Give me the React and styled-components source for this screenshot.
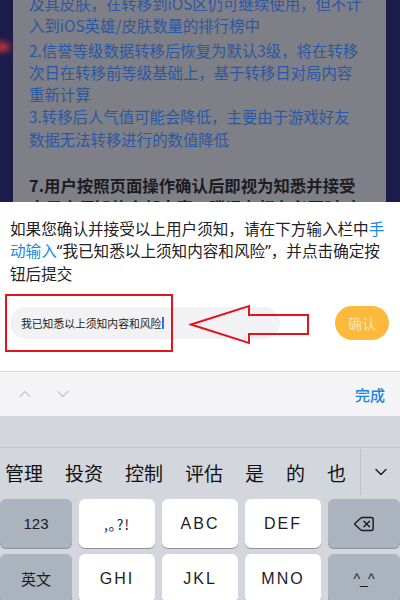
import React from "react";
import styled, { createGlobalStyle } from "styled-components";
import { ChevronUp, ChevronDown, Delete } from "lucide-react";

const Global = createGlobalStyle`
  html, body { margin: 0; padding: 0; }
  body { width: 400px; height: 600px; overflow: hidden; background: #d3d6dc;
    font-family: "Noto Sans CJK SC", "Noto Sans", sans-serif; }
`;

const Screen = styled.div`
  width: 400px;
  height: 600px;
  display: flex;
  flex-direction: column;
  overflow: hidden;
`;

const Backdrop = styled.div`
  position: relative;
  height: 202px;
  flex: none;
  background: #1b1c4a;
  overflow: hidden;
  padding: 0 14px 0 13px;
`;

const Glow = styled.div`
  position: absolute;
  left: -6px;
  top: 42px;
  width: 16px;
  height: 10px;
  border-radius: 50%;
  background: #c8323c;
  filter: blur(3px);
`;

const Card = styled.div`
  margin-top: -8px;
  background: #7f7f87;
  padding: 0 10px 0 16px;
  height: 240px;
`;

const Line = styled.div`
  font-size: 15.4px;
  line-height: 22.3px;
  color: ${(p) => (p.$dark ? "#1c1c22" : "#2a58a4")};
  font-weight: ${(p) => (p.$dark ? 700 : 400)};
  white-space: nowrap;
  ${(p) => (p.$dark ? "font-size: 16.4px;" : "")}
  ${(p) => (p.$gap ? "margin-top: 2px;" : "")}
`;

const Blank = styled.div`
  height: 24px;
`;

const Panel = styled.div`
  background: #ffffff;
  padding: 15px 10px 31px 10px;
  flex: none;
`;

const Notice = styled.p`
  margin: 0;
  font-size: 15.6px;
  line-height: 22px;
  color: #222226;
`;

const Quote = styled.span`
  font-family: "Noto Sans", "Liberation Sans", sans-serif;
`;

const Link = styled.span`
  color: #1a8be0;
`;

const InputRow = styled.div`
  position: relative;
  margin-top: 22px;
  display: flex;
  align-items: center;
  height: 34px;
  padding-right: 1px;
`;

const InputPill = styled.div`
  width: 270px;
  height: 32px;
  border-radius: 16px;
  background: #f2f2f4;
  display: flex;
  align-items: center;
  padding-left: 11px;
  box-sizing: border-box;
  font-size: 10.8px;
  color: #222;
`;

const Caret = styled.span`
  display: inline-block;
  width: 2px;
  height: 12px;
  margin-left: 1px;
  background: #2f6fe0;
`;

const Confirm = styled.button`
  margin-left: auto;
  width: 54px;
  height: 34px;
  border: none;
  border-radius: 17px;
  background: #fdb93c;
  color: #fde3ac;
  font-family: inherit;
  font-size: 14px;
  padding: 0;
`;

const RedBox = styled.div`
  position: absolute;
  left: -5px;
  top: -12px;
  width: 168px;
  height: 58px;
  border: 2px solid #e5141c;
  box-sizing: border-box;
`;

const ArrowSvg = styled.svg`
  position: absolute;
  left: 179px;
  top: -2px;
`;

const Toolbar = styled.div`
  height: 44px;
  flex: none;
  border-top: 1px solid #d9d9dd;
  background: #f4f4f6;
  display: flex;
  align-items: center;
  padding: 0 15px 0 15px;
  gap: 18px;
  color: #c9c9ce;
`;

const Done = styled.span`
  margin-left: auto;
  color: #1a84de;
  font-size: 15px;
  font-weight: 500;
`;

const Keyboard = styled.div`
  flex: 1;
  background: #d3d6dc;
  display: flex;
  flex-direction: column;
`;

const Compose = styled.div`
  height: 31px;
  border-bottom: 1px solid #c3c6cc;
`;

const Candidates = styled.div`
  height: 48px;
  display: flex;
  align-items: center;
  padding-left: 5px;
`;

const Words = styled.div`
  display: flex;
  gap: 22px;
  flex: 1;
  font-size: 19px;
  color: #111;
`;

const Divider = styled.div`
  width: 1px;
  height: 46px;
  background: #bfc2c8;
`;

const Expand = styled.div`
  width: 39px;
  display: flex;
  justify-content: center;
  color: #222;
`;

const Keys = styled.div`
  display: grid;
  grid-template-columns: 72px repeat(3, 1fr) 72px;
  grid-auto-rows: 49px;
  column-gap: 7px;
  row-gap: 6px;
  padding-top: 3px;
`;

const Key = styled.div`
  background: ${(p) => (p.$gray ? "#abb3bf" : "#ffffff")};
  border-radius: 6px;
  box-shadow: 0 1px 0 #8d9199;
  display: flex;
  align-items: center;
  justify-content: center;
  color: #1c1c1e;
  font-family: ${(p) => (p.$latin ? '"Liberation Sans", Arial, sans-serif' : "inherit")};
  font-size: ${(p) => p.$size || 15}px;
  letter-spacing: ${(p) => p.$spacing || 0}px;
`;

const blue = [
  "及其皮肤，在转移到iOS区仍可继续使用，但不计",
  "入到iOS英雄/皮肤数量的排行榜中",
];
const blue2 = [
  "2.信誉等级数据转移后恢复为默认3级，将在转移",
  "次日在转移前等级基础上，基于转移日对局内容",
  "重新计算",
  "3.转移后人气值可能会降低，主要由于游戏好友",
  "数据无法转移进行的数值降低",
];

export default function App() {
  return (
    <Screen>
      <Global />
      <Backdrop>
        <Glow />
        <Card>
          {blue.map((t) => (
            <Line key={t}>{t}</Line>
          ))}
          <Line $gap>{blue2[0]}</Line>
          {blue2.slice(1).map((t) => (
            <Line key={t}>{t}</Line>
          ))}
          <Blank />
          <Line $dark>7.用户按照页面操作确认后即视为知悉并接受</Line>
          <Line $dark>本用户须知的全部内容，腾讯有权在必要时对</Line>
        </Card>
      </Backdrop>
      <Panel>
        <Notice>
          如果您确认并接受以上用户须知，请在下方输入栏中<Link>手动输入</Link>
          <Quote>“</Quote>我已知悉以上须知内容和风险<Quote>”</Quote>，并点击确定按钮后提交
        </Notice>
        <InputRow>
          <InputPill>
            我已知悉以上须知内容和风险
            <Caret />
          </InputPill>
          <Confirm>确认</Confirm>
          <RedBox />
          <ArrowSvg width="121" height="41" viewBox="0 0 121 41">
            <polygon
              points="2,20.5 60,2 60,11 119,11 119,30 60,30 60,39"
              fill="none"
              stroke="#e5141c"
              strokeWidth="2"
              strokeLinejoin="miter"
            />
          </ArrowSvg>
        </InputRow>
      </Panel>
      <Toolbar>
        <ChevronUp size={20} strokeWidth={1.6} />
        <ChevronDown size={20} strokeWidth={1.6} />
        <Done>完成</Done>
      </Toolbar>
      <Keyboard>
        <Compose />
        <Candidates>
          <Words>
            <span>管理</span>
            <span>投资</span>
            <span>控制</span>
            <span>评估</span>
            <span>是</span>
            <span>的</span>
            <span>也</span>
          </Words>
          <Divider />
          <Expand>
            <ChevronDown size={20} strokeWidth={1.8} />
          </Expand>
        </Candidates>
        <Keys>
          <Key $gray $latin $size={15}>123</Key>
          <Key $size={14} $spacing={1}>,｡?!</Key>
          <Key $latin $size={16} $spacing={2}>ABC</Key>
          <Key $latin $size={16} $spacing={2}>DEF</Key>
          <Key $gray>
            <Delete size={22} strokeWidth={1.6} />
          </Key>
          <Key $gray $size={15}>英文</Key>
          <Key $latin $size={16} $spacing={2}>GHI</Key>
          <Key $latin $size={16} $spacing={2}>JKL</Key>
          <Key $latin $size={16} $spacing={2}>MNO</Key>
          <Key $gray $latin $size={14}>^_^</Key>
        </Keys>
      </Keyboard>
    </Screen>
  );
}
